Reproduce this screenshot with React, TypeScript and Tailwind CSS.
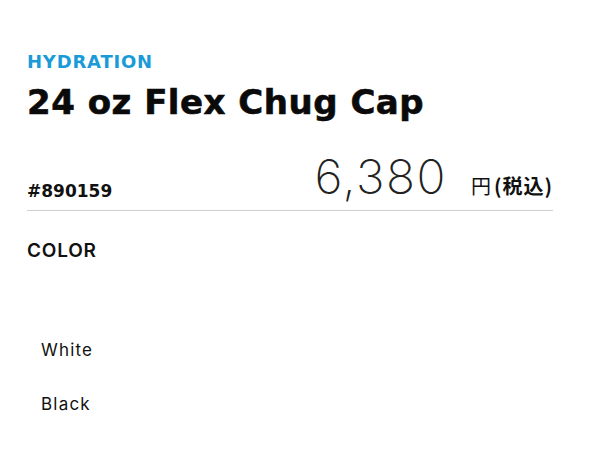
export default function App() {
  const colors = ["White", "Black"];

  return (
    <div className="w-[600px] h-[450px] bg-white text-[#111] font-['Inter','Noto_Sans_CJK_JP',sans-serif] overflow-hidden">
      <div className="pl-[27px] pr-[47px] pt-[50px]">
        {/* Category + title */}
        <p className="text-[18px] leading-[24px] font-bold tracking-[0.8px] text-[#1a9bd7] font-['DejaVu_Sans',sans-serif]">
          HYDRATION
        </p>
        <h1 className="mt-[8px] text-[34px] leading-[40px] font-bold tracking-[0.5px] text-[#0a0a0a] font-['DejaVu_Sans',sans-serif] [-webkit-text-stroke:0.6px_#0a0a0a]">
          24 oz Flex Chug Cap
        </h1>

        {/* Code + price */}
        <div className="mt-[32px] flex items-end justify-between border-b border-[#cfcfcf] pb-[9px]">
          <span className="text-[17px] leading-[20px] font-bold font-['DejaVu_Sans',sans-serif]">#890159</span>
          <div className="flex items-baseline">
            <span className="text-[48px] leading-[46px] font-extralight tracking-[1.5px] text-[#222]">6,380</span>
            <span className="ml-[24px] text-[20px] font-['Noto_Sans_CJK_JP',sans-serif]">円</span>
            <span className="ml-[3px] text-[20px] font-bold tracking-[1px] font-['Noto_Sans_CJK_JP',sans-serif]">(税込)</span>
          </div>
        </div>

        {/* Color options */}
        <p className="mt-[28px] text-[19px] leading-[24px] font-semibold tracking-[0.8px]">COLOR</p>
        <ul className="mt-[75px] pl-[14px] flex flex-col gap-[30px]">
          {colors.map((c) => (
            <li key={c} className="text-[17px] leading-[24px] tracking-[1.2px]">
              {c}
            </li>
          ))}
        </ul>
      </div>
    </div>
  );
}
